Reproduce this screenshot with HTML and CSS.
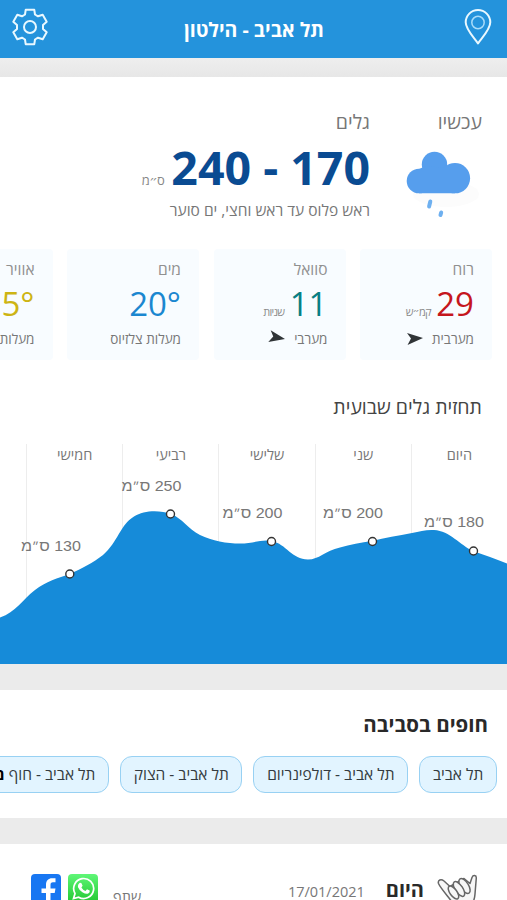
FILE: index.html
```html
<!DOCTYPE html>
<html lang="he" dir="rtl">
<head>
    <meta charset="UTF-8">
    <meta name="viewport" content="width=device-width, initial-scale=1.0">
    <title>תל אביב - הילטון</title>
    <link rel="stylesheet" href="styles.css">
</head>
<body>
    <header class="topbar">
        <svg class="pin" width="28" height="36" viewBox="0 0 28 36">
            <path d="M14 34.5C10 28.500 1.700 20.500 1.700 13.300a12.300 12.300 0 0 1 24.600 0C26.300 20.500 18 28.500 14 34.500z"/>
            <circle class="thin" cx="14" cy="13.500" r="6.200"/>
        </svg>
        <h1>תל אביב - הילטון</h1>
        <svg class="gear" width="36" height="38" viewBox="-18 -19 36 38">
            <path d="M-5-12.500L-4.300-17.200H4.300L5-12.500 8-10.700 12.700-12.300 16.700-5.200 13-1.900V1.900L16.700 5.200 12.700 12.300 8 10.700 5 12.500 4.300 17.200H-4.300L-5 12.500-8 10.700-12.700 12.300-16.700 5.200-13 1.900V-1.900L-16.700-5.200-12.700-12.300-8-10.700z"/>
            <circle r="6"/>
        </svg>
    </header>

    <main>
        <section class="card current">
            <div class="now">
                <div class="sky">
                    <h2>עכשיו</h2>
                    <svg width="80" height="80" viewBox="0 0 80 80">
                        <ellipse class="shade" cx="43" cy="54" rx="33" ry="13"/>
                        <g class="cloud">
                            <circle cx="16" cy="41" r="12.300"/>
                            <circle cx="31.500" cy="24.500" r="12.700"/>
                            <circle cx="52" cy="38.200" r="15.100"/>
                            <path d="M16 29l7-3 18 2 11 10v15.300H16z"/>
                        </g>
                        <path class="drop" d="M27.300 61.500l-1.200 5M38.200 72.500l-.7 2.500"/>
                    </svg>
                </div>
                <div class="waves">
                    <h2>גלים</h2>
                    <div class="height"><b>170 - 240</b> <small>ס״מ</small></div>
                    <p>ראש פלוס עד ראש וחצי, ים סוער</p>
                </div>
            </div>

            <div class="stats">
                <div class="stat">
                    <h3>רוח</h3>
                    <div class="value red">29 <small>קמ״ש</small></div>
                    <p>מערבית <svg class="arrow" width="18" height="14" viewBox="0 0 18 14"><path d="M1 1l16 5-15.500 7L5 6.500z"/></svg></p>
                </div>
                <div class="stat">
                    <h3>סוואל</h3>
                    <div class="value teal">11 <small>שניות</small></div>
                    <p>מערבי <svg class="arrow tilt" width="18" height="14" viewBox="0 0 18 14"><path d="M1 1l16 5-15.500 7L5 6.500z"/></svg></p>
                </div>
                <div class="stat">
                    <h3>מים</h3>
                    <div class="value blue"><bdi dir="ltr">20°</bdi></div>
                    <p>מעלות צלזיוס</p>
                </div>
                <div class="stat">
                    <h3>אוויר</h3>
                    <div class="value yellow"><bdi dir="ltr">15°</bdi></div>
                    <p>מעלות צלזיוס</p>
                </div>
            </div>

            <h2 class="chart-title">תחזית גלים שבועית</h2>
            <div class="chart">
                <div class="days">
                    <span>היום</span>
                    <span>שני</span>
                    <span>שלישי</span>
                    <span>רביעי</span>
                    <span>חמישי</span>
                    <span></span>
                </div>
                <svg class="graph" width="507" height="220" viewBox="0 0 507 220">
                    <path class="sea" d="M0 173.500C16 168 22 156 35 146C46 137.500 58 134 70 130C82 124 93 119 103 111C118 98 120 81 134 72.500C144 66 160 66 171 70C182 74 188 85 200 91C212 97 227 99.500 240 99.500C253 99.500 261 95 272 97C286 100 292 115.500 308 115.500C319 115.500 325 107 340 103.500C350 100.500 361 98.500 372 97C385 94 398 91.500 412 89C420 87.500 426 85.500 434 86C450 87 460 101 473 107C484 111 496 115 507 119.500V220H0z"/>
                    <g class="dots">
                        <circle cx="473.500" cy="107" r="4"/>
                        <circle cx="372.500" cy="97.500" r="4"/>
                        <circle cx="271.500" cy="97.500" r="4"/>
                        <circle cx="170.500" cy="70" r="4"/>
                        <circle cx="69.800" cy="130" r="4"/>
                    </g>
                    <g class="labels">
                        <text x="484" y="83" textLength="60" lengthAdjust="spacingAndGlyphs">180 ס<tspan>״</tspan>מ</text>
                        <text x="383" y="73.500" textLength="60" lengthAdjust="spacingAndGlyphs">200 ס<tspan>״</tspan>מ</text>
                        <text x="282.500" y="73.500" textLength="60" lengthAdjust="spacingAndGlyphs">200 ס<tspan>״</tspan>מ</text>
                        <text x="181.500" y="46.500" textLength="60" lengthAdjust="spacingAndGlyphs">250 ס<tspan>״</tspan>מ</text>
                        <text x="81" y="106.500" textLength="60" lengthAdjust="spacingAndGlyphs">130 ס<tspan>״</tspan>מ</text>
                    </g>
                </svg>
            </div>
        </section>

        <section class="card nearby">
            <h2>חופים בסביבה</h2>
            <div class="beaches">
                <a>תל אביב</a>
                <a>תל אביב - דולפינריום</a>
                <a>תל אביב - הצוק</a>
                <a>תל אביב - חוף <b>מציצים</b></a>
            </div>
        </section>

        <section class="card today">
            <svg class="shaka" width="42" height="42" viewBox="0 0 42 42">
                <path d="M13 24C9 19 4 13 2.500 9.500 1.500 6 5 4.500 8 7l6 5.500 14-8 6 5 2-6C37 .8 40.500 .8 40.300 4L39 20c-.5 8-4 13-10 16-6-2-11-5-16-12z"/>
                <g>
                    <ellipse cx="28.500" cy="12" rx="8.500" ry="4" transform="rotate(58 28.500 12)"/>
                    <ellipse cx="23" cy="15" rx="8.500" ry="3.800" transform="rotate(56 23 15)"/>
                    <ellipse cx="17.500" cy="18.500" rx="7.500" ry="3.500" transform="rotate(54 17.500 18.500)"/>
                </g>
            </svg>
            <h2>היום</h2>
            <time>17/01/2021</time>
            <span class="share">שתף</span>
            <svg class="social" width="30" height="30" viewBox="0 0 30 30">
                <defs>
                    <linearGradient id="green" x2="0" y2="1"><stop stop-color="#5ff777"/><stop offset="1" stop-color="#20c52e"/></linearGradient>
                </defs>
                <rect width="30" height="30" rx="4" fill="url(#green)"/>
                <path d="M5.500 24.500l1.500-5a10 10 0 1 1 3.700 3.700z" fill="none" stroke="#fff" stroke-width="1.700"/>
                <path d="M11.500 9q1-.8 2 .3l1.100 2.400-1.200 1.700q1.500 2.600 4.100 3.500l1.500-1.600 2.700 1.300q.5 2-1.500 3-2.200.9-5.800-1.400-3.500-2.500-4.500-5.300-.3-2.400 1.600-3.900z" fill="#fff"/>
            </svg>
            <svg class="social" width="30" height="30" viewBox="0 0 30 30">
                <rect width="30" height="30" rx="4" fill="#1877f2"/>
                <path d="M15 30V19h-4.500v-4.500H15V11c0-4.500 2.500-6.700 6-6.700h3.500v4H22c-2 0-2.500 1-2.500 2.700v3.500h5L23.700 19h-4.200v11z" fill="#fff"/>
            </svg>
        </section>
    </main>
</body>
</html>
```
FILE: styles.css
```css
* {
    box-sizing: border-box;
}

body {
    margin: 0;
    height: 900px;
    overflow: hidden;
    font-family: "Open Sans", "Noto Sans", "DejaVu Sans", sans-serif;
    background: #ebebeb;
    color: #777;
}

h1, h2, h3, p {
    margin: 0;
    font-weight: normal;
    white-space: nowrap;
}

svg {
    display: block;
    flex: none;
}

.topbar {
    height: 58px;
    padding: 0 15px 4px 12px;
    display: flex;
    align-items: center;
    justify-content: space-between;
    background: #2493dc;
}

.topbar h1 {
    padding: 4px 4px 0 0;
    font-size: 19.5px;
    font-weight: bold;
    color: #fff;
}

.topbar svg {
    fill: none;
    stroke: #e9f8ff;
    stroke-width: 2;
    stroke-linejoin: round;
}

.topbar .thin {
    stroke: #a9dcfa;
    stroke-width: 1.5;
}

main {
    padding-top: 19px;
    background: linear-gradient(#eeeeee, #e7e7e7 19px, #ebebeb 20px);
}

.card {
    background: #fff;
    margin-bottom: 26px;
    overflow: hidden;
}

.current {
    height: 587px;
}

.now {
    display: flex;
    height: 172px;
    padding: 31px 25px 0 0;
}

.now h2 {
    font-size: 19.5px;
    line-height: 28px;
}

.sky {
    width: 112px;
}

.sky svg {
    margin: 4px -1px 0 0;
}

.shade {
    fill: #fcfcfc;
}

.cloud {
    fill: #569eed;
}

.drop {
    fill: none;
    stroke: #6eb0f0;
    stroke-width: 4;
    stroke-linecap: round;
}

.height {
    height: 64px;
    line-height: 63px;
    white-space: nowrap;
}

.height b {
    font-size: 46.5px;
    color: #0a4b92;
}

.height small {
    margin-right: 3px;
    font-size: 13px;
    letter-spacing: -0.6px;
    color: #888;
}

.height b, .height small {
    display: inline-block;
    vertical-align: baseline;
}

.waves p {
    font-size: 15.5px;
    line-height: 20px;
}

.stats {
    display: flex;
    gap: 14.5px;
    padding-right: 15px;
}

.stat {
    flex: none;
    width: 132px;
    height: 111px;
    padding: 9px 18px 0 0;
    background: #f8fcff;
    border-radius: 4px;
}

.stat h3 {
    font-size: 15.5px;
    line-height: 22px;
    color: #909090;
}

.value {
    height: 46px;
    font-size: 33px;
    line-height: 47px;
    white-space: nowrap;
}

.value small {
    margin-right: -3px;
    font-size: 11px;
    letter-spacing: -0.8px;
    color: #8b8b8b;
}

.red {
    color: #c5161d;
}

.teal {
    color: #087f83;
}

.blue {
    color: #1b87d0;
}

.yellow {
    color: #cdb414;
}

.stat p {
    display: flex;
    gap: 8px;
    align-items: center;
    font-size: 13.5px;
    line-height: 26px;
}

.arrow {
    fill: #303437;
}

.tilt {
    transform: translateY(-1px) rotate(14deg);
}

.chart-title {
    padding: 33px 25px 0 0;
    font-size: 19.5px;
    line-height: 28px;
    color: #444;
}

.chart {
    position: relative;
    height: 220px;
    margin-top: 23px;
}

.days {
    display: flex;
    height: 220px;
}

.days span {
    flex: none;
    width: 96.2px;
    border-left: 1px solid #ededed;
    font-size: 14.5px;
    line-height: 22px;
    text-align: center;
}

/* wave curve lies over the day columns */
.graph {
    position: absolute;
    left: 0;
    top: 0;
}

.sea {
    fill: #168bd9;
}

.dots circle {
    fill: #fff;
    stroke: #333;
    stroke-width: 1.4;
}

.labels text {
    font-family: "Liberation Sans", Arial, sans-serif;
    font-size: 15px;
    fill: #777;
}

.labels tspan {
    font-size: 11px;
}

.nearby {
    height: 128px;
    padding: 20px 10px 0 0;
}

.nearby h2 {
    padding-right: 9px;
    font-size: 20.5px;
    font-weight: bold;
    line-height: 28px;
    color: #292929;
}

.beaches {
    display: flex;
    gap: 11px;
    padding-top: 18px;
}

.beaches a {
    flex: none;
    height: 37px;
    padding: 0 12.7px;
    border: 1px solid #98d1f3;
    border-radius: 12px;
    background: #e2f4ff;
    font-size: 15.5px;
    line-height: 35px;
    color: #343b40;
    white-space: nowrap;
}

.beaches b {
    color: #000;
}

.today {
    display: flex;
    height: 80px;
    margin: 0;
    padding: 30px 29px 0 0;
}

.shaka {
    fill: #f7f7f7;
    stroke: #666;
    stroke-width: 1.5;
    stroke-linejoin: round;
}

.today h2 {
    margin-right: 12px;
    font-size: 20px;
    font-weight: bold;
    line-height: 32px;
    color: #292929;
}

.today time {
    margin-right: 21px;
    font-size: 14.5px;
    line-height: 36px;
}

.share {
    margin-right: auto;
    font-size: 14.5px;
    line-height: 46px;
}

.social {
    margin-right: 7px;
}

.share + .social {
    margin-right: 15px;
}

.social:last-child {
    margin-left: 31px;
}
```
